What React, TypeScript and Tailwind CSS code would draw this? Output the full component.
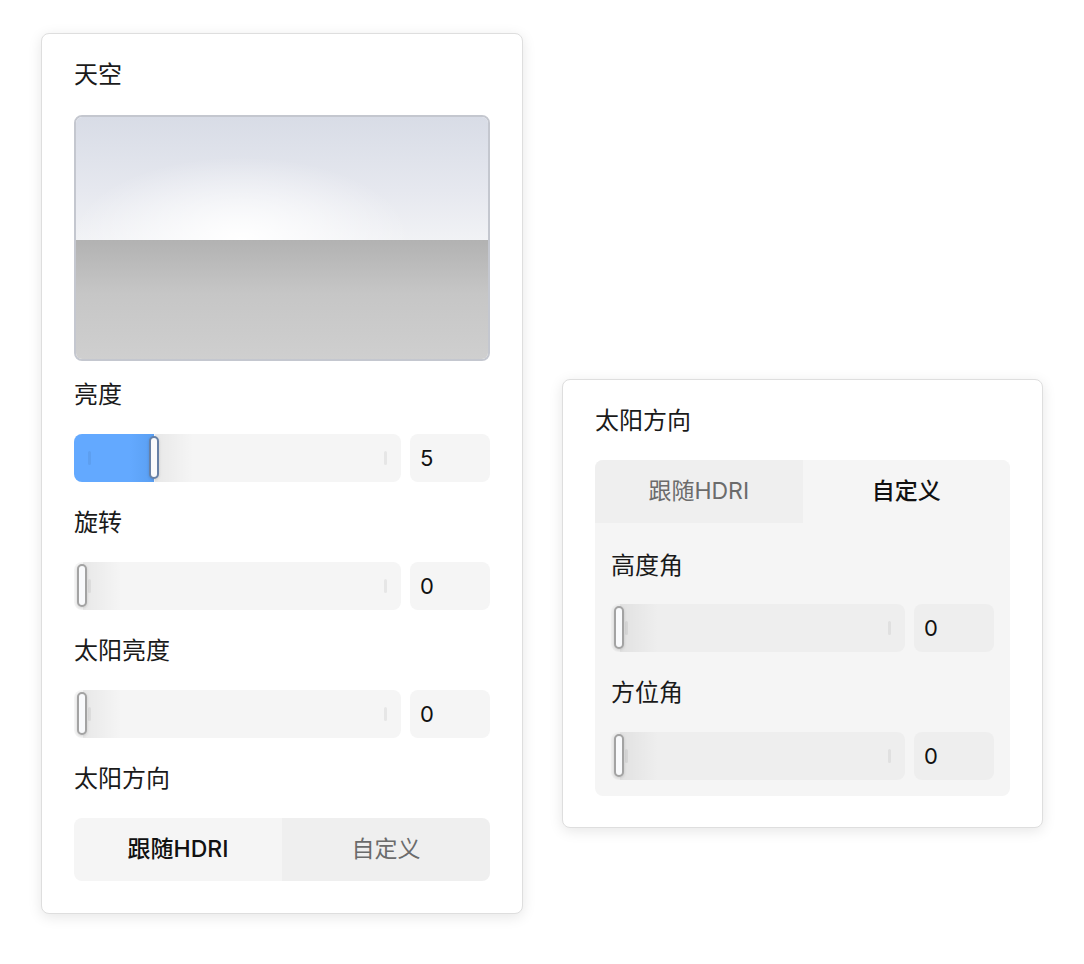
import React from "react";

type SliderProps = {
  thumb: number;
  value: string;
  fill?: boolean;
  inner?: boolean;
};

function Slider({ thumb, value, fill, inner }: SliderProps) {
  const trackBg = inner ? "bg-[#eeeeee]" : "bg-[#f5f5f5]";
  return (
    <div className="flex h-12 items-stretch gap-[9px]">
      <div className={`relative flex-1 overflow-hidden rounded-lg ${trackBg}`}>
        {fill && (
          <div
            className="absolute left-0 top-0 bottom-0 bg-[linear-gradient(to_right,#63a9ff_70%,#5a9ff2)]"
            style={{ width: thumb + 5 }}
          />
        )}
        <div
          className="absolute top-0 bottom-0 w-[38px] bg-[linear-gradient(to_right,rgba(0,0,0,0.055),rgba(0,0,0,0))]"
          style={{ left: thumb + 6 }}
        />
        <div className="absolute left-[14px] top-1/2 h-[14px] w-[3px] -translate-y-1/2 rounded-sm bg-black/[0.06]" />
        <div className="absolute right-[14px] top-1/2 h-[14px] w-[3px] -translate-y-1/2 rounded-sm bg-black/[0.06]" />
        <div
          className={`absolute top-[2px] h-[43px] w-[10px] rounded-full border-2 bg-[#f9fafc] shadow-[0_1px_3px_rgba(0,0,0,0.15)] ${
            fill ? "border-[#6680a6]" : "border-[#a3a3a3]"
          }`}
          style={{ left: thumb }}
        />
      </div>
      <div
        className={`flex w-20 items-center rounded-lg pl-[10px] text-[22px] text-[#111] ${trackBg}`}
      >
        {value}
      </div>
    </div>
  );
}

function Label({ children, className = "" }: { children: React.ReactNode; className?: string }) {
  return (
    <div className={`flex h-8 items-center text-[24px] font-normal text-[#1a1a1a] ${className}`}>
      {children}
    </div>
  );
}

function Segmented({ selected, inner }: { selected: 0 | 1; inner?: boolean }) {
  const on = "bg-[#f5f5f5] text-[#111] font-medium";
  const off = "bg-[#efefef] text-[#6b6b6b]";
  return (
    <div className={`flex h-[63px] overflow-hidden text-[23px] ${inner ? "rounded-t-lg" : "rounded-lg"}`}>
      <div className={`flex flex-1 items-center justify-center ${selected === 0 ? on : off}`}>
        跟随HDRI
      </div>
      <div className={`flex flex-1 items-center justify-center ${selected === 1 ? on : off}`}>
        自定义
      </div>
    </div>
  );
}

export default function App() {
  return (
    <div className="min-h-[964px] w-full bg-white font-['Inter','Noto_Sans_CJK_SC',sans-serif]">
      <div className="flex items-start gap-[39px] pl-[41px] pt-[33px]">
        {/* Left card */}
        <div className="w-[482px] rounded-lg border border-[#dedede] bg-white px-8 pt-[25px] pb-8 shadow-[0_3px_14px_rgba(0,0,0,0.1)]">
          <Label>天空</Label>
          <div className="mt-6 flex h-[246px] flex-col overflow-hidden rounded-lg border-2 border-[#c4c7cf]">
            <div className="h-[123px] bg-[radial-gradient(ellipse_55%_90%_at_40%_100%,#ffffff_0%,rgba(255,255,255,0)_75%),linear-gradient(to_bottom,#d8dce6,#e6e8ef_60%,#f1f2f5)]" />
            <div className="flex-1 bg-[linear-gradient(to_bottom,#b2b2b2,#c6c6c6_45%,#cfcfcf)]" />
          </div>
          <Label className="mt-[18px]">亮度</Label>
          <div className="mt-[23px]">
            <Slider thumb={75} value="5" fill />
          </div>
          <Label className="mt-[25px]">旋转</Label>
          <div className="mt-[23px]">
            <Slider thumb={3} value="0" />
          </div>
          <Label className="mt-[25px]">太阳亮度</Label>
          <div className="mt-[23px]">
            <Slider thumb={3} value="0" />
          </div>
          <Label className="mt-[25px]">太阳方向</Label>
          <div className="mt-[23px]">
            <Segmented selected={0} />
          </div>
        </div>

        {/* Right card */}
        <div className="mt-[346px] w-[481px] rounded-lg border border-[#dedede] bg-white px-8 pt-[25px] pb-[31px] shadow-[0_3px_14px_rgba(0,0,0,0.1)]">
          <Label>太阳方向</Label>
          <div className="mt-[23px] rounded-lg bg-[#f5f5f5] pb-4">
            <Segmented selected={1} inner />
            <div className="px-4">
              <Label className="mt-[27px]">高度角</Label>
              <div className="mt-[22px]">
                <Slider thumb={3} value="0" inner />
              </div>
              <Label className="mt-[25px]">方位角</Label>
              <div className="mt-[23px]">
                <Slider thumb={3} value="0" inner />
              </div>
            </div>
          </div>
        </div>
      </div>
    </div>
  );
}
